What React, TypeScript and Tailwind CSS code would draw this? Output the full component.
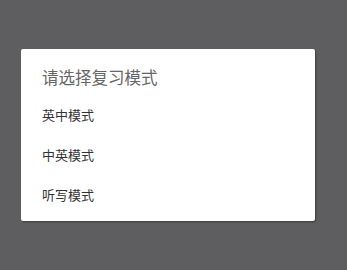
import React from "react";

const modes = ["英中模式", "中英模式", "听写模式"];

const App = () => {
  return (
    <div
      className="w-[347px] h-[270px] bg-[#5e5e60] pt-[49px] pl-[21px]"
      style={{ fontFamily: '"Noto Sans CJK SC", "Noto Sans", sans-serif' }}>
      <div className="w-[294px] h-[172px] bg-white rounded-[2px] shadow-[1px_1px_2px_rgba(0,0,0,0.35)] pl-[21px]">
        <div className="pt-[17px] h-[46px] text-[16.5px] leading-[22px] text-[#666666]">请选择复习模式</div>
        {modes.map((m) => (
          <div key={m} className="h-10 flex items-center text-[13px] text-[#333333]">
            {m}
          </div>
        ))}
      </div>
    </div>
  );
};

export default App;
